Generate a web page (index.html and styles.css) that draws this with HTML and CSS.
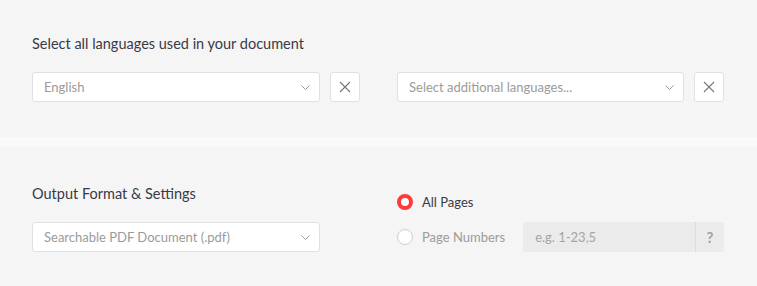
FILE: index.html
```html
<!DOCTYPE html>
<html>
<head>
    <title>OCR Settings</title>
    <meta name="viewport" content="width=device-width, initial-scale=1.0">
    <link rel="stylesheet" href="styles.css">
</head>
<body>
    <div class="section section-languages">
        <h2 class="section-title">Select all languages used in your document</h2>
        <div class="columns">
            <div class="select-row">
                <div class="select">
                    <span class="select-value">English</span>
                    <svg class="chevron" width="9" height="5" viewBox="0 0 9 5"><path d="M0.5 0.5 L4.5 4.5 L8.5 0.5" fill="none" stroke="#9a9a9a" stroke-width="1"/></svg>
                </div>
                <button class="clear-btn" aria-label="Clear">
                    <svg width="12" height="12" viewBox="0 0 12 12"><path d="M1 1 L11 11 M11 1 L1 11" stroke="#777" stroke-width="1.1"/></svg>
                </button>
            </div>
            <div class="select-row">
                <div class="select">
                    <span class="select-value">Select additional languages...</span>
                    <svg class="chevron" width="9" height="5" viewBox="0 0 9 5"><path d="M0.5 0.5 L4.5 4.5 L8.5 0.5" fill="none" stroke="#9a9a9a" stroke-width="1"/></svg>
                </div>
                <button class="clear-btn" aria-label="Clear">
                    <svg width="12" height="12" viewBox="0 0 12 12"><path d="M1 1 L11 11 M11 1 L1 11" stroke="#777" stroke-width="1.1"/></svg>
                </button>
            </div>
        </div>
    </div>

    <div class="section section-output">
        <div class="columns">
            <div>
                <h2 class="section-title">Output Format &amp; Settings</h2>
                <div class="select select-format">
                    <span class="select-value">Searchable PDF Document (.pdf)</span>
                    <svg class="chevron" width="9" height="5" viewBox="0 0 9 5"><path d="M0.5 0.5 L4.5 4.5 L8.5 0.5" fill="none" stroke="#9a9a9a" stroke-width="1"/></svg>
                </div>
            </div>
            <div class="pages">
                <label class="radio-row radio-first">
                    <span class="radio checked"></span>
                    <span class="radio-label">All Pages</span>
                </label>
                <label class="radio-row">
                    <span class="radio"></span>
                    <span class="radio-label muted">Page Numbers</span>
                    <span class="page-input">
                        <span class="page-placeholder">e.g. 1-23,5</span>
                        <span class="help">?</span>
                    </span>
                </label>
            </div>
        </div>
    </div>
</body>
</html>
```

FILE: styles.css
```css
:root {
    --bg-color: #f5f5f5;
    --gap-color: #fafafa;
    --text-color: #393a46;
    --muted-color: #9b9b9b;
    --border-color: #e1e1e1;
    --accent-color: #ff3a3a;
    --border-radius: 3px;
}

* {
    box-sizing: border-box;
}

body {
    margin: 0;
    background-color: var(--gap-color);
    font-family: Lato, "Open Sans", Arial, sans-serif;
    color: var(--text-color);
}

.section {
    background-color: var(--bg-color);
    padding: 35px 33px 35px 32px;
}

.section-output {
    margin-top: 10px;
    padding-top: 38px;
    padding-bottom: 34px;
}

.section-title {
    margin: 0 0 19px;
    font-size: 14.5px;
    font-weight: 400;
    line-height: 18px;
}

.columns {
    display: grid;
    grid-template-columns: 328px 1fr;
    column-gap: 37px;
}

.select-row {
    display: flex;
    gap: 10px;
}

.select {
    flex: 1;
    height: 30px;
    display: flex;
    align-items: center;
    justify-content: space-between;
    padding: 0 9px 0 11px;
    background-color: white;
    border: 1px solid var(--border-color);
    border-radius: var(--border-radius);
}

.select-format {
    width: 288px;
}

.select-value {
    font-size: 13px;
    color: var(--muted-color);
}

.chevron {
    display: block;
}

.clear-btn {
    width: 30px;
    height: 30px;
    padding: 0;
    display: flex;
    align-items: center;
    justify-content: center;
    background-color: white;
    border: 1px solid var(--border-color);
    border-radius: var(--border-radius);
}

.pages {
    padding-top: 8px;
}

.radio-row {
    display: flex;
    align-items: center;
    height: 30px;
}

.radio-first {
    height: 18px;
    margin-bottom: 11px;
}

.radio {
    width: 16px;
    height: 16px;
    border-radius: 50%;
    border: 1px solid #cfcfcf;
    background-color: white;
    flex-shrink: 0;
}

.radio.checked {
    border: 4px solid var(--accent-color);
}

.radio-label {
    margin-left: 9px;
    font-size: 13px;
}

.radio-label.muted {
    color: var(--muted-color);
}

.page-input {
    flex: 1;
    margin-left: 18px;
    height: 30px;
    display: flex;
    align-items: center;
    background-color: #ebebeb;
    border-radius: var(--border-radius);
}

.page-placeholder {
    flex: 1;
    padding-left: 12px;
    font-size: 13px;
    color: #a5a5a5;
}

.help {
    width: 29px;
    height: 100%;
    display: flex;
    align-items: center;
    justify-content: center;
    border-left: 1px solid #dcdcdc;
    font-size: 15px;
    font-weight: 700;
    color: #a0a0a0;
}
```
